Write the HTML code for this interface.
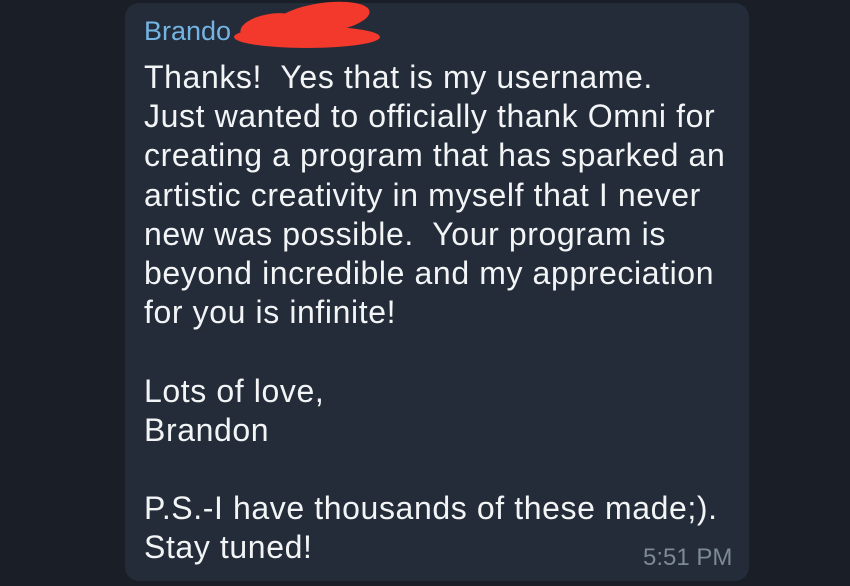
<!DOCTYPE html>
<html><head><style>
body{margin:0;width:850px;height:586px;background:#1a1f27;overflow:hidden;font-family:"Liberation Sans",Arial,sans-serif}
.b{position:absolute;left:125px;top:3px;width:624px;height:578px;background:#232c38;border-radius:14px}
.n{position:absolute;left:144px;top:16px;font-size:27px;color:#74b4e4}
.t{position:absolute;left:144px;top:58px;font-size:32px;line-height:39.2px;color:#f2f4f6;white-space:pre;letter-spacing:0.6px}
.tm{position:absolute;left:643px;top:544px;font-size:24px;color:#7d8996}
.r{position:absolute;background:#f2392c;border-radius:50%}
</style></head><body>
<div class="b"></div>
<div class="n">Brando</div>
<div class="r" style="left:240px;top:14px;width:60px;height:26px;transform:rotate(-10deg)"></div>
<div class="r" style="left:275px;top:3px;width:95px;height:30px;transform:rotate(-8deg)"></div>
<div class="r" style="left:234px;top:26px;width:146px;height:22px"></div>
<div class="t">Thanks!  Yes that is my username.
Just wanted to officially thank Omni for
creating a program that has sparked an
artistic creativity in myself that I never
new was possible.  Your program is
beyond incredible and my appreciation
for you is infinite!

Lots of love,
Brandon

P.S.-I have thousands of these made;).
Stay tuned!</div>
<div class="tm">5:51 PM</div>
</body></html>
